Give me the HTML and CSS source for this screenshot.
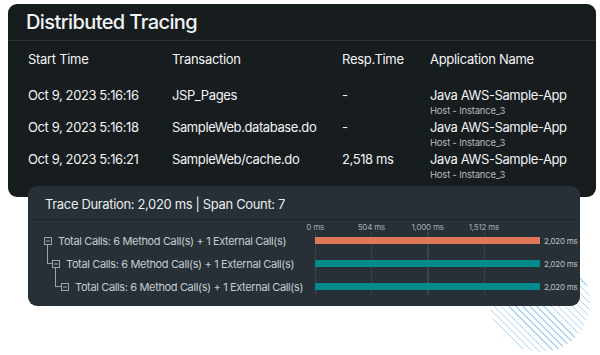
FILE: index.html
```html
<!DOCTYPE html>
<html>
<head>
<meta charset="utf-8">
<link rel="stylesheet" href="styles.css">
</head>
<body>
<div class="hatch"></div>
<section class="card main">
  <h1 class="title">Distributed Tracing</h1>
  <div class="table">
    <div class="row head">
      <div>Start Time</div><div>Transaction</div><div>Resp.Time</div><div>Application Name</div>
    </div>
    <div class="row">
      <div>Oct 9, 2023 5:16:16</div><div>JSP_Pages</div><div>-</div>
      <div><div>Java AWS-Sample-App</div><div class="host">Host - Instance_3</div></div>
    </div>
    <div class="row">
      <div>Oct 9, 2023 5:16:18</div><div>SampleWeb.database.do</div><div>-</div>
      <div><div>Java AWS-Sample-App</div><div class="host">Host - Instance_3</div></div>
    </div>
    <div class="row">
      <div>Oct 9, 2023 5:16:21</div><div>SampleWeb/cache.do</div><div>2,518 ms</div>
      <div><div>Java AWS-Sample-App</div><div class="host">Host - Instance_3</div></div>
    </div>
  </div>
</section>
<section class="card trace">
  <div class="trace-head">Trace Duration: 2,020 ms | Span Count: 7</div>
  <div class="trace-body">
    <div class="axis"><span>0 ms</span><span>504 ms</span><span>1,000 ms</span><span>1,512 ms</span></div>
    <div class="gridlines"></div>

    <div class="node n1"><svg class="box" width="8" height="8" viewBox="0 0 8 8"><rect x="0.5" y="0.5" width="7" height="7" fill="none" stroke="#9aa4a9"/><line x1="2" y1="4" x2="6" y2="4" stroke="#9aa4a9"/></svg><span>Total Calls: 6 Method Call(s) + 1 External Call(s)</span></div>
    <div class="bar orange r1"></div>
    <div class="val r1">2,020 ms</div>

    <div class="node n2"><svg class="box" width="8" height="8" viewBox="0 0 8 8"><rect x="0.5" y="0.5" width="7" height="7" fill="none" stroke="#9aa4a9"/><line x1="2" y1="4" x2="6" y2="4" stroke="#9aa4a9"/></svg><span>Total Calls: 6 Method Call(s) + 1 External Call(s)</span></div>
    <div class="bar teal r2"></div>
    <div class="val r2">2,020 ms</div>

    <div class="node n3"><svg class="box" width="8" height="8" viewBox="0 0 8 8"><rect x="0.5" y="0.5" width="7" height="7" fill="none" stroke="#9aa4a9"/><line x1="2" y1="4" x2="6" y2="4" stroke="#9aa4a9"/></svg><span>Total Calls: 6 Method Call(s) + 1 External Call(s)</span></div>
    <div class="bar teal r3"></div>
    <div class="val r3">2,020 ms</div>
  </div>
</section>
</body>
</html>
```
FILE: styles.css
```css
html, body { margin: 0; padding: 0; background: #ffffff; }
body {
  position: relative;
  padding: 4px 4px 0 8px;
  font-family: Inter, "Noto Sans", sans-serif;
  width: 588px;
  height: 351px;
  overflow: hidden;
}
.hatch {
  position: absolute;
  left: 490px;
  top: 252px;
  width: 100px;
  height: 100px;
  border-radius: 50%;
  background: repeating-linear-gradient(45deg, #a8d5f2 0 1px, transparent 1px 5px);
  z-index: 0;
}
.card { position: relative; z-index: 1; border-radius: 9px; }
.main { background: #171c1f; color: #f2f4f5; }
.title {
  margin: 0;
  padding: 6px 18px;
  font-size: 20px;
  line-height: 24px;
  font-weight: 500;
  letter-spacing: -0.6px;
  border-bottom: 1px solid #2b3439;
}
.table { padding: 10px 0 16px 20px; font-size: 13px; line-height: 17px; letter-spacing: -0.4px; }
.row {
  display: grid;
  grid-template-columns: 144px 170px 88px 1fr;
  margin-bottom: 2px;
}
.row:last-child { margin-bottom: 0; }
.row.head { margin-bottom: 19px; letter-spacing: -0.3px; }
.host { font-size: 9.5px; line-height: 12px; margin-top: 1px; color: #b3babe; letter-spacing: -0.2px; }

.trace {
  background: #263036;
  margin: -11px 0 0 20px;
  width: 552px;
  color: #e9ecee;
}
.trace-head {
  padding: 10px 17px 7px;
  font-size: 13px;
  line-height: 16px;
  letter-spacing: -0.35px;
  border-bottom: 1px solid #1d2529;
}
.trace-body {
  display: grid;
  grid-template-columns: 271px 225px 1fr;
  grid-template-rows: 12px 23px 23px 14px;
  padding: 2px 0 12px 16px;
  align-items: start;
}
.axis {
  grid-column: 2;
  grid-row: 1;
  display: flex;
  margin-left: -28px;
  font-size: 8px;
  line-height: 10px;
  letter-spacing: -0.2px;
  color: #a3acb1;
}
.axis span { width: 56.25px; text-align: center; flex: none; }
.gridlines {
  grid-column: 2;
  grid-row: 2 / 5;
  align-self: stretch;
  margin: -2px 0 -1px;
  background: repeating-linear-gradient(to right, #38444b 0 1px, transparent 1px 56.25px);
}
.node {
  grid-column: 1;
  position: relative;
  display: flex;
  align-items: center;
  gap: 6px;
  font-size: 11px;
  line-height: 14px;
  letter-spacing: -0.36px;
  color: #c6ccd0;
  white-space: nowrap;
}
.box { flex: none; }
.n1 { grid-row: 2; }
.n2 { grid-row: 3; margin-left: 8px; }
.n3 { grid-row: 4; margin-left: 17px; }
.n2::before, .n3::before {
  content: "";
  position: absolute;
  top: -12px;
  height: 18px;
  border-left: 1px solid #9aa4a9;
  border-bottom: 1px solid #9aa4a9;
}
.n2::before { left: -5px; width: 4px; }
.n3::before { left: -6px; width: 5px; }
.bar { grid-column: 2; height: 7px; margin-top: 3px; }
.orange { background: #e0775a; }
.teal { background: #008c8c; }
.r1 { grid-row: 2; }
.r2 { grid-row: 3; }
.r3 { grid-row: 4; }
.val {
  grid-column: 3;
  padding-left: 4px;
  font-size: 8px;
  line-height: 14px;
  letter-spacing: -0.25px;
  color: #bcc3c7;
}
```
